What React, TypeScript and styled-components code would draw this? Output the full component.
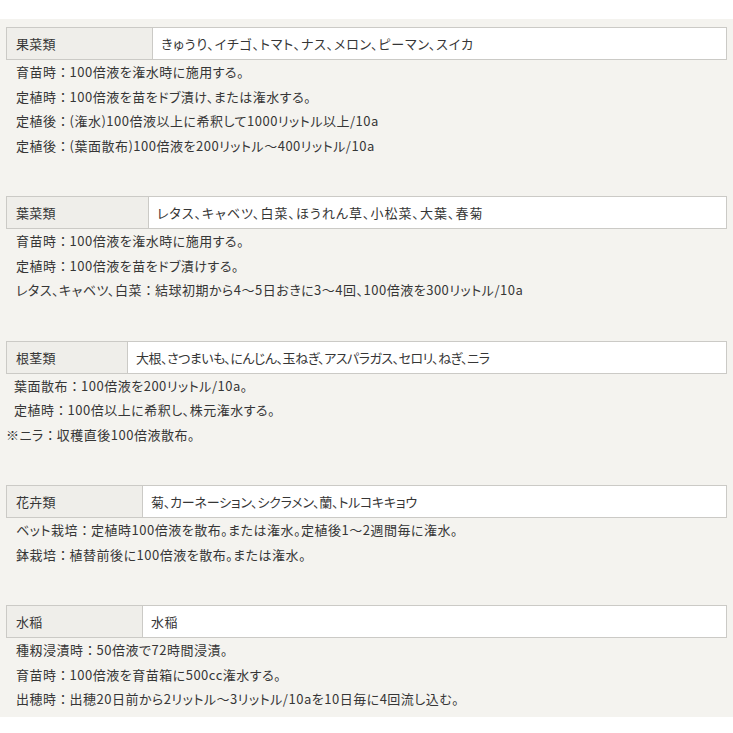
import styled, { createGlobalStyle } from 'styled-components';

const GlobalStyle = createGlobalStyle`
  html, body {
    margin: 0;
    padding: 0;
    background: #ffffff;
  }
  body {
    font-family: "Noto Sans CJK JP", "Noto Sans", sans-serif;
    color: #363636;
  }
`;

const Panel = styled.main`
  margin-top: 19px;
  background-color: #f4f3ef;
  padding: 8px 6px 5px;
  display: flex;
  flex-direction: column;
  gap: 38px;
`;

const Section = styled.section`
  display: flex;
  flex-direction: column;
`;

const Row = styled.div<{ $label: number }>`
  display: grid;
  grid-template-columns: ${(p) => p.$label}px 1fr;
  height: 33px;
  box-sizing: border-box;
  border: 1px solid #cbcac6;
  background: #ffffff;
`;

const Cell = styled.div<{ $tracking?: number }>`
  display: flex;
  align-items: center;
  font-size: 13px;
  font-feature-settings: 'palt';
  letter-spacing: ${(p) => p.$tracking ?? 0.5}px;
  white-space: nowrap;
  padding-left: 8px;
`;

const LabelCell = styled(Cell)`
  background: #efeeea;
  border-right: 1px solid #cbcac6;
  padding-left: 9px;
  letter-spacing: 0.2px;
`;

const Line = styled.p<{ $indent?: number }>`
  margin: 0;
  padding-left: ${(p) => p.$indent ?? 10}px;
  font-size: 13px;
  line-height: 24.5px;
  font-feature-settings: 'palt';
  letter-spacing: 0.5px;
  white-space: nowrap;
`;

const Colon = styled.span`
  font-feature-settings: normal;
  letter-spacing: 0;
`;

interface Note {
  head: string;
  body: string;
  indent?: number;
}

interface Crop {
  label: string;
  labelWidth: number;
  kinds: string;
  tracking: number;
  notes: Note[];
}

const crops: Crop[] = [
  {
    label: '果菜類',
    labelWidth: 146,
    kinds: 'きゅうり、イチゴ、トマト、ナス、メロン、ピーマン、スイカ',
    tracking: 0.8,
    notes: [
      { head: '育苗時', body: '100倍液を潅水時に施用する。' },
      { head: '定植時', body: '100倍液を苗をドブ漬け、または潅水する。' },
      { head: '定植後', body: '(潅水)100倍液以上に希釈して1000リットル以上/10a' },
      { head: '定植後', body: '(葉面散布)100倍液を200リットル〜400リットル/10a' },
    ],
  },
  {
    label: '葉菜類',
    labelWidth: 142,
    kinds: 'レタス、キャベツ、白菜、ほうれん草、小松菜、大葉、春菊',
    tracking: 1.0,
    notes: [
      { head: '育苗時', body: '100倍液を潅水時に施用する。' },
      { head: '定植時', body: '100倍液を苗をドブ漬けする。' },
      { head: 'レタス、キャベツ、白菜', body: '結球初期から4〜5日おきに3〜4回、100倍液を300リットル/10a' },
    ],
  },
  {
    label: '根茎類',
    labelWidth: 121,
    kinds: '大根、さつまいも、にんじん、玉ねぎ、アスパラガス、セロリ、ねぎ、ニラ',
    tracking: -0.5,
    notes: [
      { head: '葉面散布', body: '100倍液を200リットル/10a。', indent: 8 },
      { head: '定植時', body: '100倍以上に希釈し、株元潅水する。', indent: 8 },
      { head: '※ニラ', body: '収穫直後100倍液散布。', indent: 0 },
    ],
  },
  {
    label: '花卉類',
    labelWidth: 136,
    kinds: '菊、カーネーション、シクラメン、蘭、トルコキキョウ',
    tracking: -0.2,
    notes: [
      { head: 'ベット栽培', body: '定植時100倍液を散布。または潅水。定植後1〜2週間毎に潅水。' },
      { head: '鉢栽培', body: '植替前後に100倍液を散布。または潅水。' },
    ],
  },
  {
    label: '水稲',
    labelWidth: 136,
    kinds: '水稲',
    tracking: 0.5,
    notes: [
      { head: '種籾浸漬時', body: '50倍液で72時間浸漬。' },
      { head: '育苗時', body: '100倍液を育苗箱に500cc潅水する。' },
      { head: '出穂時', body: '出穂20日前から2リットル〜3リットル/10aを10日毎に4回流し込む。' },
    ],
  },
];

export default function App() {
  return (
    <>
      <GlobalStyle />
      <Panel>
        {crops.map((c) => (
          <Section key={c.label}>
            <Row $label={c.labelWidth}>
              <LabelCell>{c.label}</LabelCell>
              <Cell $tracking={c.tracking}>{c.kinds}</Cell>
            </Row>
            {c.notes.map((n, i) => (
              <Line key={i} $indent={n.indent}>
                {n.head}
                <Colon>：</Colon>
                {n.body}
              </Line>
            ))}
          </Section>
        ))}
      </Panel>
    </>
  );
}
